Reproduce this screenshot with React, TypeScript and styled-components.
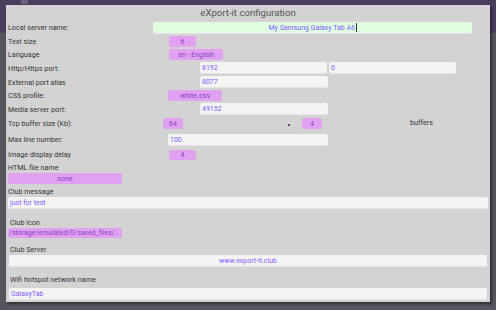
import React from "react";
import styled, { createGlobalStyle } from "styled-components";

const GlobalStyle = createGlobalStyle`
  html, body {
    margin: 0;
    padding: 0;
    width: 496px;
    height: 310px;
    overflow: hidden;
    font-family: Roboto, "Liberation Sans", sans-serif;
  }
`;

const Screen = styled.div`
  position: relative;
  width: 496px;
  height: 310px;
  background: #55555e;
`;

const AppBar = styled.div`
  height: 33px;
  background: #4b3d5d;
  padding-left: 21px;
`;

const AppIcon = styled.div`
  width: 7px;
  height: 4px;
  background: #6a6478;
  border-radius: 0 0 1px 1px;
`;

const Dialog = styled.div`
  position: absolute;
  left: 6px;
  top: 5px;
  width: 484px;
  height: 297px;
  box-sizing: border-box;
  padding: 0 2px;
  background: #d3d3d3;
  box-shadow: 2px 2px 2px rgba(20, 20, 30, 0.55);
  color: #333;
`;

const Title = styled.div`
  height: 15px;
  line-height: 15px;
  text-align: center;
  font-size: 9.6px;
  color: #555;
`;

const Row = styled.div<{ $h: number }>`
  display: flex;
  align-items: center;
  height: ${(p) => p.$h}px;
`;

const Label = styled.div<{ $w: number }>`
  flex: none;
  width: ${(p) => p.$w}px;
  font-size: 7.2px;
  white-space: nowrap;
`;

const Field = styled.div<{
  $w?: number;
  $align?: string;
  $green?: boolean;
  $ml?: number;
}>`
  flex: none;
  box-sizing: border-box;
  width: ${(p) => (p.$w ? `${p.$w}px` : "auto")};
  height: 12px;
  margin-left: ${(p) => p.$ml ?? 0}px;
  padding: 0 2px;
  display: flex;
  align-items: center;
  justify-content: ${(p) => p.$align ?? "flex-start"};
  background: ${(p) => (p.$green ? "#e0ffe0" : "#f4f4f4")};
  border-radius: 2px;
  box-shadow: inset 0 -1px 0 #e4e4e4;
  font-size: 7px;
  color: #7d5cff;
  white-space: nowrap;
`;

const Caret = styled.span`
  display: inline-block;
  width: 1px;
  height: 9px;
  margin-left: 0.5px;
  background: #333;
`;

const Chip = styled.div<{ $w: number; $h?: number; $left?: boolean; $ml?: number }>`
  flex: none;
  box-sizing: border-box;
  width: ${(p) => p.$w}px;
  height: ${(p) => p.$h ?? 11}px;
  margin-left: ${(p) => p.$ml ?? 0}px;
  padding: 0 1px;
  display: flex;
  align-items: center;
  justify-content: ${(p) => (p.$left ? "flex-start" : "center")};
  background: #e0a2f0;
  border-radius: 2px;
  font-size: 7px;
  color: #8a3cc6;
  white-space: nowrap;
  overflow: hidden;
`;

const Dot = styled.span<{ $ml: number }>`
  margin-left: ${(p) => p.$ml}px;
  margin-top: 3px;
  width: 2px;
  height: 2px;
  background: #555;
`;

const Plain = styled.span<{ $ml: number }>`
  margin-left: ${(p) => p.$ml}px;
  margin-top: -2px;
  font-size: 7.2px;
  color: #333;
`;

const Section = styled.div<{ $mt: number }>`
  margin-top: ${(p) => p.$mt}px;
  display: flex;
  flex-direction: column;
  align-items: flex-start;
`;

const Caption = styled.div<{ $h: number; $indent?: number; $mb?: number }>`
  height: ${(p) => p.$h}px;
  line-height: ${(p) => p.$h}px;
  padding-left: ${(p) => p.$indent ?? 0}px;
  margin-bottom: ${(p) => p.$mb ?? 0}px;
  font-size: 7.2px;
`;

export default function App() {
  return (
    <>
      <GlobalStyle />
      <Screen>
        <AppBar>
          <AppIcon />
        </AppBar>
        <Dialog>
          <Title>eXport-it configuration</Title>

          <Row $h={15}>
            <Label $w={145}>Local server name:</Label>
            <Field $w={319} $align="center" $green>
              My Samsung Galaxy Tab A6
              <Caret />
            </Field>
          </Row>

          <Row $h={13}>
            <Label $w={161}>Text size</Label>
            <Chip $w={27}>6</Chip>
          </Row>

          <Row $h={13}>
            <Label $w={161}>Language</Label>
            <Chip $w={54}>en - English</Chip>
          </Row>

          <Row $h={14}>
            <Label $w={192}>Http/Https port:</Label>
            <Field $w={127}>8192</Field>
            <Field $w={127} $ml={2}>
              0
            </Field>
          </Row>

          <Row $h={14}>
            <Label $w={192}>External port alias</Label>
            <Field $w={128}>8077</Field>
          </Row>

          <Row $h={13}>
            <Label $w={160}>CSS profile:</Label>
            <Chip $w={54}>white.css</Chip>
          </Row>

          <Row $h={14}>
            <Label $w={192}>Media server port:</Label>
            <Field $w={128}>49152</Field>
          </Row>

          <Row $h={15}>
            <Label $w={155}>Tcp buffer size (Kb):</Label>
            <Chip $w={20}>64</Chip>
            <Dot $ml={105} />
            <Chip $w={20} $ml={12}>
              4
            </Chip>
            <Plain $ml={88}>buffers</Plain>
          </Row>

          <Row $h={17}>
            <Label $w={160}>Max line number:</Label>
            <Field $w={160}>100</Field>
          </Row>

          <Row $h={13}>
            <Label $w={161}>Image display delay</Label>
            <Chip $w={27} $h={10}>
              4
            </Chip>
          </Row>

          <Section $mt={1}>
            <Caption $h={11}>HTML file name</Caption>
            <Chip $w={114}>none</Chip>
          </Section>

          <Section $mt={2}>
            <Caption $h={11}>Club message</Caption>
            <Field $w={480}>just for test</Field>
          </Section>

          <Section $mt={8}>
            <Caption $h={11} $indent={2}>
              Club icon
            </Caption>
            <Chip $w={114} $h={10} $left>
              /storage/emulated/0/saved_files/..
            </Chip>
          </Section>

          <Section $mt={7}>
            <Caption $h={10} $indent={2}>
              Club Server
            </Caption>
            <Field $w={478} $ml={1} $align="center">
              www.export-it.club
            </Field>
          </Section>

          <Section $mt={7}>
            <Caption $h={11} $indent={2} $mb={3}>
              Wifi hotspot network name
            </Caption>
            <Field $w={478} $ml={1}>
              GalaxyTab
            </Field>
          </Section>
        </Dialog>
      </Screen>
    </>
  );
}
